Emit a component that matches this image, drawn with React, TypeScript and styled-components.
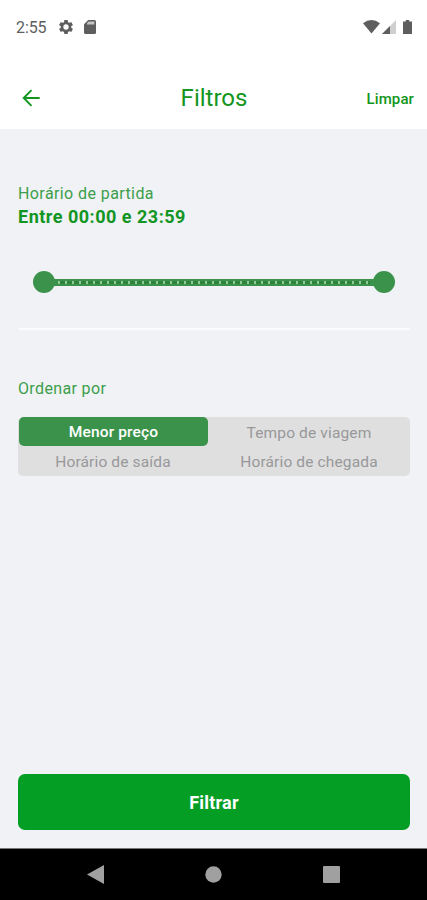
import React, { useState } from "react";
import styled, { createGlobalStyle } from "styled-components";

const GlobalStyle = createGlobalStyle`
  *, *::before, *::after { box-sizing: border-box; }
  body { margin: 0; font-family: Roboto, "Liberation Sans", sans-serif; }
  button { font-family: inherit; border: 0; padding: 0; margin: 0; background: none; cursor: pointer; }
`;

const Screen = styled.div`
  display: flex;
  flex-direction: column;
  width: 100%;
  height: 900px;
  background: #f0f2f6;
  overflow: hidden;
`;

const StatusBar = styled.div`
  display: flex;
  align-items: center;
  justify-content: space-between;
  height: 67px;
  padding: 0 15px 13px 16px;
  background: #fff;
  color: #5e5e5e;
`;

const StatusGroup = styled.div`
  display: flex;
  align-items: center;
`;

const Clock = styled.span`
  width: 42px;
  font-size: 16px;
  line-height: 20px;
  letter-spacing: -0.1px;
  padding-top: 2px;
`;

const StatusIcon = styled.svg<{ $gap?: number }>`
  display: block;
  margin-left: ${(p) => p.$gap ?? 0}px;
`;

const Header = styled.header`
  display: grid;
  grid-template-columns: 1fr auto 1fr;
  align-items: center;
  height: 62px;
  padding: 0 13px 0 22px;
  background: #fff;
  color: #129620;
`;

const BackButton = styled.button`
  justify-self: start;
  color: inherit;
  svg { display: block; }
`;

const Title = styled.h1`
  margin: 0 0 1px -8px;
  font-size: 24px;
  font-weight: 400;
  line-height: 30px;
`;

const ClearButton = styled.button`
  justify-self: end;
  color: inherit;
  font-size: 15px;
  font-weight: 500;
  line-height: 20px;
  letter-spacing: 0.1px;
  padding-top: 1px;
`;

const Content = styled.main`
  display: flex;
  flex-direction: column;
  flex: 1;
  padding: 52px 17px 18px 18px;
`;

const Label = styled.div<{ $spacing: number }>`
  height: 24px;
  padding-top: 1px;
  color: #3c9e4a;
  font-size: 16px;
  line-height: 24px;
  letter-spacing: ${(p) => p.$spacing}px;
`;

const TimeRange = styled.div`
  color: #129523;
  font-size: 18px;
  font-weight: 700;
  line-height: 24px;
  letter-spacing: 0.5px;
`;

const Slider = styled.div`
  display: flex;
  align-items: center;
  height: 22px;
  margin: 42px 15px 0;
`;

const Thumb = styled.span`
  flex: none;
  width: 22px;
  height: 22px;
  border-radius: 50%;
  background: #3b934b;
`;

const Track = styled.div`
  flex: 1;
  display: flex;
  align-items: center;
  height: 7px;
  margin: 0 -2px;
  padding: 0 5px;
  background: #3b934b;
`;

const Ticks = styled.div`
  flex: 1;
  height: 3px;
  background: repeating-linear-gradient(to right, #92c99b 0 2px, #2f843d 2px 7px);
`;

const Divider = styled.hr`
  width: 391px;
  height: 2px;
  margin: 35px 0 46px 1px;
  border: 0;
  background: #fafbfc;
`;

const Options = styled.div`
  display: grid;
  grid-template-columns: 190px 1fr;
  grid-template-rows: 30px 29px;
  height: 59px;
  margin-top: 17px;
  border-radius: 5px;
  background: #dfdfdf;
`;

const Option = styled.button<{ $active: boolean }>`
  height: ${(p) => (p.$active ? "29px" : "100%")};
  margin-left: ${(p) => (p.$active ? "1px" : "0")};
  padding-top: 1px;
  border-radius: 5px;
  background: ${(p) => (p.$active ? "#3b934b" : "transparent")};
  color: ${(p) => (p.$active ? "#fff" : "#98989b")};
  font-size: 15.5px;
  font-weight: ${(p) => (p.$active ? 500 : 400)};
  line-height: 28px;
  letter-spacing: 0.14px;
`;

const SubmitButton = styled.button`
  height: 56px;
  margin-top: auto;
  border-radius: 7px;
  background: #049e25;
  color: #fff;
  font-size: 18px;
  font-weight: 700;
  letter-spacing: 0.2px;
`;

const NavBar = styled.nav`
  display: grid;
  grid-template-columns: repeat(3, 118px);
  justify-content: center;
  align-items: center;
  height: 52px;
  border-top: 1px solid #777;
  background: #000;
`;

const NavButton = styled.button`
  display: flex;
  justify-content: center;
`;

const OPTIONS = ["Menor preço", "Tempo de viagem", "Horário de saída", "Horário de chegada"];

export default function App() {
  const [selected, setSelected] = useState(0);
  return (
    <Screen>
      <GlobalStyle />
      <StatusBar>
        <StatusGroup>
          <Clock>2:55</Clock>
          <StatusIcon $gap={1} width="14" height="14" viewBox="2 2 20 20" fill="currentColor">
            <path fillRule="evenodd" d="M19.43 12.98a7.8 7.8 0 0 0 0-1.96l2.11-1.65a.5.5 0 0 0 .12-.64l-2-3.46a.5.5 0 0 0-.61-.22l-2.49 1a7.3 7.3 0 0 0-1.69-.98l-.38-2.65A.49.49 0 0 0 14 2h-4a.49.49 0 0 0-.49.42l-.38 2.65a7.7 7.7 0 0 0-1.69.98l-2.49-1a.49.49 0 0 0-.61.22l-2 3.46a.49.49 0 0 0 .12.64l2.11 1.65a7.9 7.9 0 0 0 0 1.96l-2.11 1.65a.5.5 0 0 0-.12.64l2 3.46c.12.22.39.3.61.22l2.49-1c.52.4 1.08.73 1.69.98l.38 2.65c.03.24.24.42.49.42h4c.25 0 .46-.18.49-.42l.38-2.65a7.7 7.7 0 0 0 1.69-.98l2.49 1c.23.09.49 0 .61-.22l2-3.46a.5.5 0 0 0-.12-.64zM12 15.8a3.8 3.8 0 1 1 0-7.6 3.8 3.8 0 0 1 0 7.6z" />
          </StatusIcon>
          <StatusIcon $gap={11} width="12" height="14" viewBox="0 0 12 14">
            <path d="M4.2 0H10.5Q12 0 12 1.5V12.5Q12 14 10.5 14H1.5Q0 14 0 12.5V4.2Z" fill="currentColor" />
            <path d="M4.6 1.5H10.4V4.4H3V3.3Z" fill="#c4c4c4" />
          </StatusIcon>
        </StatusGroup>
        <StatusGroup>
          <StatusIcon width="17" height="14" viewBox="0 0 17 14">
            <path d="M0 3.2Q8.5-3 17 3.2L8.5 13.5Z" fill="currentColor" />
          </StatusIcon>
          <StatusIcon $gap={2} width="14" height="14" viewBox="0 0 14 14">
            <path d="M14 0V14H0Z" fill="#cfcfcf" />
            <path d="M8 6V14H0Z" fill="currentColor" />
          </StatusIcon>
          <StatusIcon $gap={7} width="9" height="14" viewBox="0 0 9 14">
            <path d="M2.8 0H6.2V1.4H9V14H0V1.4H2.8Z" fill="currentColor" />
          </StatusIcon>
        </StatusGroup>
      </StatusBar>
      <Header>
        <BackButton aria-label="Voltar">
          <svg width="18" height="18" viewBox="0 0 18 18" fill="none" stroke="currentColor" strokeWidth="1.9">
            <path d="M17.7 9H2M9.5 1.2 1.7 9l7.8 7.8" />
          </svg>
        </BackButton>
        <Title>Filtros</Title>
        <ClearButton onClick={() => setSelected(0)}>Limpar</ClearButton>
      </Header>
      <Content>
        <Label $spacing={0.41}>Horário de partida</Label>
        <TimeRange>Entre 00:00 e 23:59</TimeRange>
        <Slider>
          <Thumb />
          <Track>
            <Ticks />
          </Track>
          <Thumb />
        </Slider>
        <Divider />
        <Label $spacing={0.36}>Ordenar por</Label>
        <Options>
          {OPTIONS.map((text, i) => (
            <Option key={text} $active={i === selected} onClick={() => setSelected(i)}>
              {text}
            </Option>
          ))}
        </Options>
        <SubmitButton>Filtrar</SubmitButton>
      </Content>
      <NavBar>
        <NavButton aria-label="Voltar">
          <svg width="17" height="19" viewBox="0 0 17 19"><path d="M17 0V19L0 9.5Z" fill="#a0a0a0" /></svg>
        </NavButton>
        <NavButton aria-label="Início">
          <svg width="17" height="17" viewBox="0 0 17 17"><circle cx="8.5" cy="8.5" r="8.2" fill="#a0a0a0" /></svg>
        </NavButton>
        <NavButton aria-label="Recentes">
          <svg width="17" height="17" viewBox="0 0 17 17"><rect width="17" height="17" rx="1" fill="#a0a0a0" /></svg>
        </NavButton>
      </NavBar>
    </Screen>
  );
}
